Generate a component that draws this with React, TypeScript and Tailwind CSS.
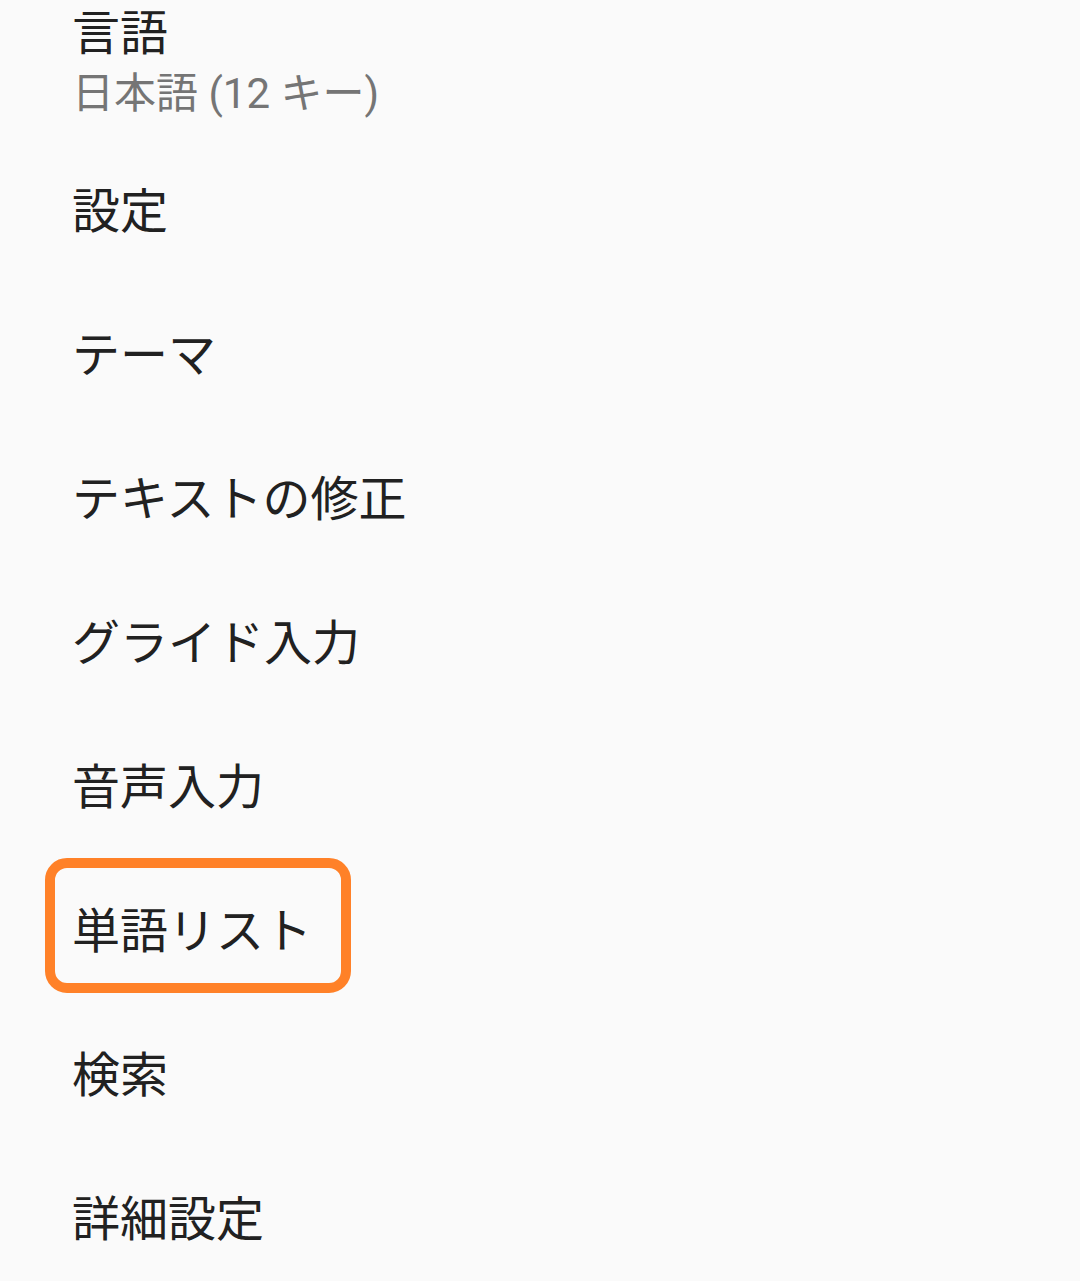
const ITEMS = ['設定', 'テーマ', 'テキストの修正', 'グライド入力', '音声入力', '単語リスト', '検索', '詳細設定']

export default function App() {
  return (
    <div
      className="w-[1080px] h-[1281px] overflow-hidden bg-[#fafafa] text-[#212121]"
      style={{ fontFamily: 'Roboto, "Noto Sans CJK JP", sans-serif' }}
    >
      {/* language row, scrolled partly off the top */}
      <div className="h-[140px] pt-[4px] pl-[72px]">
        <div className="text-[48px] leading-[60px]">言語</div>
        <div className="text-[42px] leading-[60px] text-[#757575]">日本語 (12 キー)</div>
      </div>

      {ITEMS.map(name => (
        <div key={name} className="relative h-[144px] flex items-center pl-[72px]">
          <span className="text-[48px] leading-[60px]">{name}</span>
          {name === '単語リスト' && (
            <div className="absolute left-[45px] top-[-2px] w-[306px] h-[135px] rounded-[22px] border-[10px] border-[#ff8128]" />
          )}
        </div>
      ))}
    </div>
  )
}
